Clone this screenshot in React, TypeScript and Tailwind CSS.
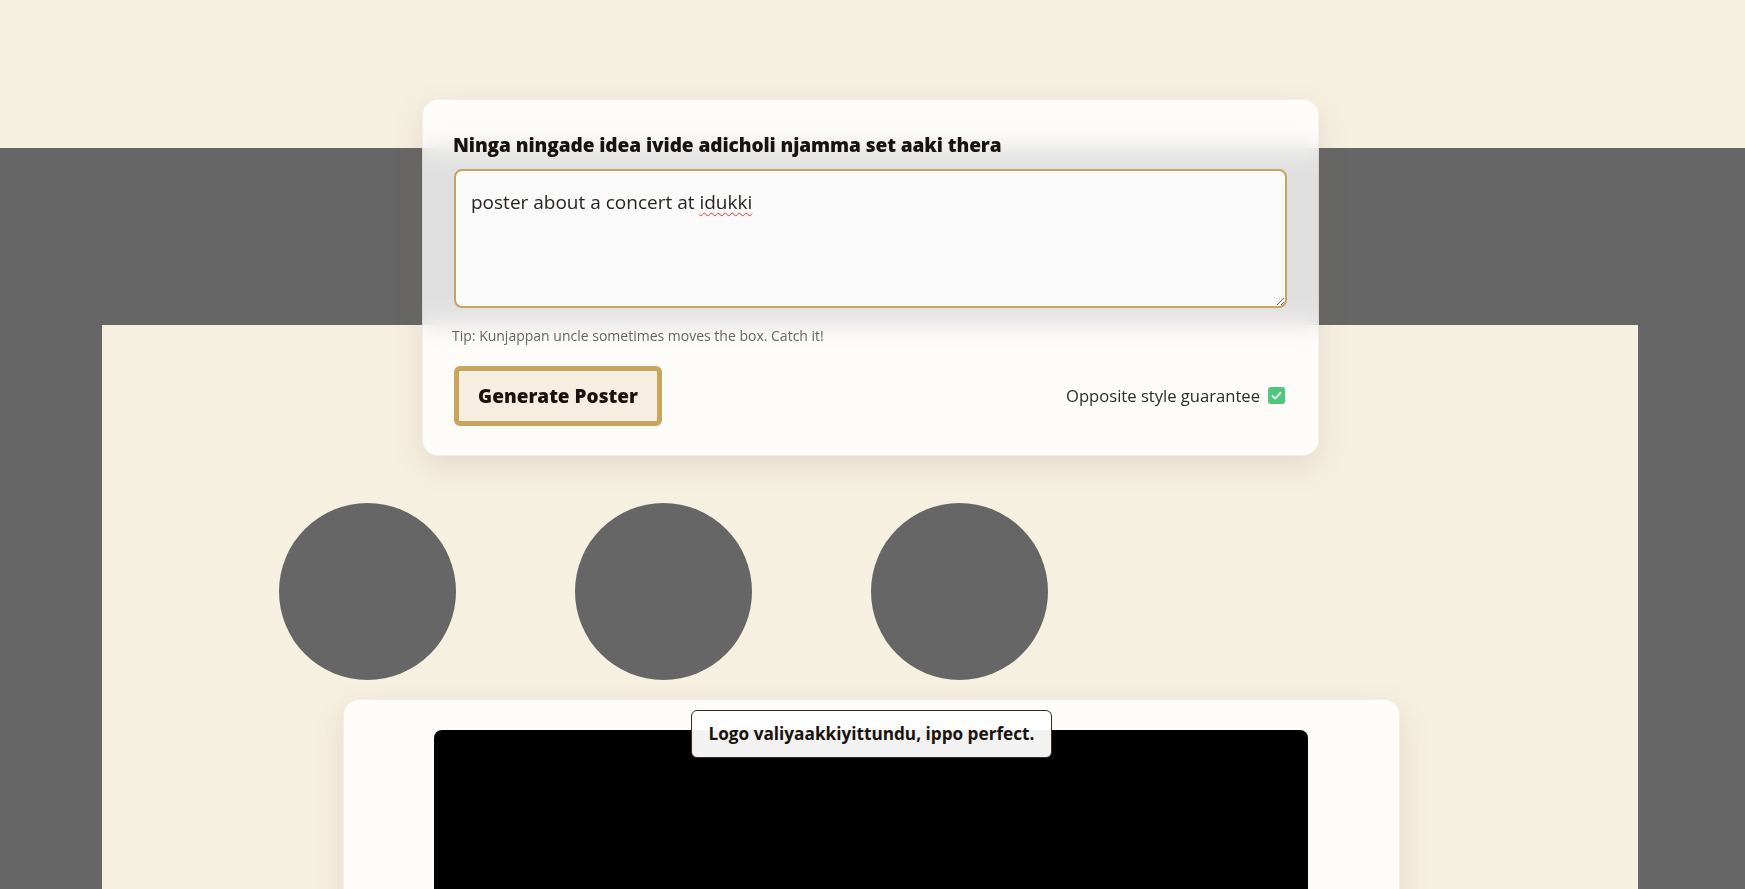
import React from "react";

const font = { fontFamily: '"Open Sans", "Noto Sans", sans-serif' };

const CheckEmoji = () => (
  <span className="inline-flex h-[17px] w-[17px] items-center justify-center rounded-[3px] bg-[#4fc77f]">
    <svg viewBox="0 0 16 16" className="h-[13px] w-[13px]" fill="none">
      <path d="M3 8.5 6.5 12 13 4.5" stroke="white" strokeWidth="2" strokeLinecap="round" strokeLinejoin="round" />
    </svg>
  </span>
);

const IdeaCard = () => {
  return (
    <div className="relative z-10 ml-[422px] w-[897px] rounded-2xl border border-black/5 bg-white/80 px-[31px] pb-[29px] pt-[31px] shadow-[0_10px_30px_rgba(120,100,60,0.15)] backdrop-blur-md">
      <h2 className="-ml-[1px] text-[19.1px] font-extrabold leading-[28px] tracking-[-0.1px] text-[#1a120d]">
        Ninga ningade idea ivide adicholi njamma set aaki thera
      </h2>
      <div className="mt-[10px] h-[139px] resize-y overflow-auto rounded-lg border-2 border-[#c8a45f] bg-[#fafafa] px-[15px] pb-[14px] pt-[17px] text-[19px] leading-[28px] text-[#2a2420]">
        poster about a concert at{" "}
        <span className="underline decoration-red-500 decoration-wavy decoration-1 underline-offset-[3px]">idukki</span>
      </div>
      <p className="-ml-[2px] mt-[18px] text-[14px] leading-[20px] text-[#6b6560]">
        Tip: Kunjappan uncle sometimes moves the box. Catch it!
      </p>
      <div className="mt-[20px] flex items-center justify-between">
        <button className="h-[60px] w-[208px] rounded-md border-[5px] border-[#c8a65f] bg-[#f6efe1] text-[19px] font-extrabold text-[#1a120d]">
          Generate Poster
        </button>
        <div className="flex items-center gap-2 pr-[2px] text-[16.6px] text-[#2e2a26]">
          <span>Opposite style guarantee</span>
          <CheckEmoji />
        </div>
      </div>
    </div>
  );
};

const Circles = () => (
  <div className="flex gap-[119px] pl-[177px]">
    <div className="h-[177px] w-[177px] rounded-full bg-[#666666]" />
    <div className="h-[177px] w-[177px] rounded-full bg-[#666666]" />
    <div className="h-[177px] w-[177px] rounded-full bg-[#666666]" />
  </div>
);

const PreviewCard = () => (
  <div className="relative ml-[241px] mt-[19px] w-[1057px] rounded-2xl border border-black/5 bg-white/80 pl-[90px] pr-[91px] pt-[30px] pb-10 shadow-[0_10px_30px_rgba(120,100,60,0.15)]">
    <div className="h-[400px] rounded-lg bg-black" />
    <div className="absolute left-1/2 top-[10px] -translate-x-1/2 whitespace-nowrap rounded-md border border-[#3b2a20] bg-white/95 px-[17px] py-[9px] text-[17.2px] font-bold leading-[28px] text-[#1a120d]">
      Logo valiyaakkiyittundu, ippo perfect.
    </div>
  </div>
);

export default function App() {
  return (
    <div
      className="min-h-screen overflow-hidden bg-[#f6f0e1] pt-[99px]"
      style={font}
    >
      <IdeaCard />
      <div className="-mt-[308px] bg-[#666666] pl-[102px] pr-[107px] pt-[177px]">
        <div className="min-h-[600px] bg-[#f6f0e1] pt-[178px]">
          <Circles />
          <PreviewCard />
        </div>
      </div>
    </div>
  );
}
